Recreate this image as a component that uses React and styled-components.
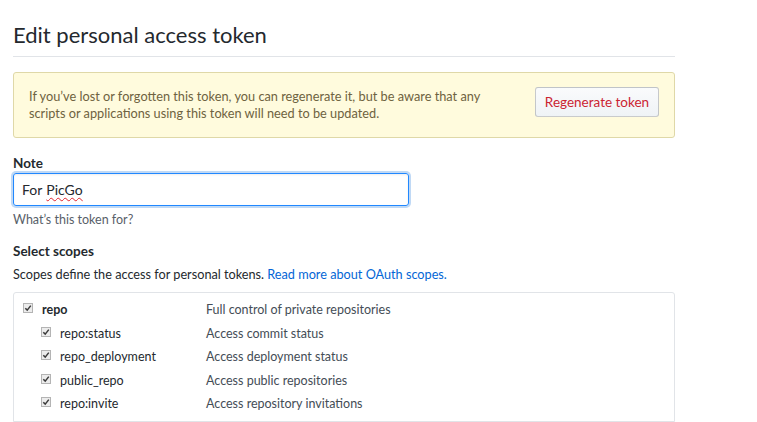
import React from 'react';
import styled, { createGlobalStyle } from 'styled-components';

const GlobalStyle = createGlobalStyle`
  body {
    margin: 0;
    background: #fff;
    font-family: Lato, "Open Sans", Arial, sans-serif;
    color: #24292e;
  }
`;

const Page = styled.div`
  width: 662px;
  padding: 0 13px;
`;

const Heading = styled.h2`
  margin: 20px 0 0;
  padding-bottom: 6px;
  border-bottom: 1px solid #e1e4e8;
  font-size: 22px;
  font-weight: 400;
  line-height: 30px;
  color: #24292e;
`;

const Flash = styled.div`
  margin-top: 15px;
  display: flex;
  align-items: flex-start;
  justify-content: space-between;
  padding: 15px 15px 15px;
  background: #fffbdd;
  border: 1px solid #dfd8a8;
  border-radius: 3px;
`;

const FlashText = styled.p`
  margin: 0;
  width: 470px;
  font-size: 12.75px;
  line-height: 17px;
  color: #6e6240;
`;

const Button = styled.button`
  margin-top: -1px;
  width: 124px;
  height: 30px;
  padding: 0;
  font-family: inherit;
  font-size: 13.5px;
  color: #cb2431;
  background: linear-gradient(#fafbfc, #eff3f6);
  border: 1px solid rgba(27, 31, 35, 0.22);
  border-radius: 3px;
`;

const FormGroup = styled.div`
  margin-top: ${(p) => p.$top}px;
`;

const Label = styled.div`
  font-size: 13.5px;
  font-weight: 700;
  line-height: 20px;
`;

const Field = styled.div`
  box-sizing: border-box;
  width: 396px;
  height: 33px;
  padding: 0 8px;
  display: flex;
  align-items: center;
  font-size: 14px;
  color: #24292e;
  border: 1px solid #2188ff;
  border-radius: 3px;
  box-shadow: inset 0 1px 2px rgba(27, 31, 35, 0.075), 0 0 0 2px rgba(3, 102, 214, 0.25);
`;

const Misspelled = styled.span`
  margin-left: 4px;
  text-decoration: underline wavy #e0242e;
  text-decoration-thickness: 1px;
  text-underline-offset: 2px;
`;

const Hint = styled.p`
  margin: 5px 0 0;
  font-size: 12.5px;
  line-height: 18px;
  color: #586069;
`;

const Description = styled.p`
  margin: 4px 0 0;
  font-size: 12.7px;
  line-height: 18px;
  color: #24292e;
`;

const Link = styled.a`
  color: #0366d6;
  text-decoration: none;
`;

const ScopeBox = styled.div`
  margin-top: 9px;
  padding: 5px 0 5px 9px;
  border: 1px solid #e1e4e8;
  border-radius: 3px 3px 0 0;
`;

const ScopeRow = styled.div`
  display: grid;
  grid-template-columns: 183px 1fr;
  height: 23.5px;
  align-items: center;
  font-size: 12.5px;
`;

const ScopeName = styled.label`
  display: flex;
  align-items: center;
  gap: 9px;
  padding-left: ${(p) => (p.$child ? 18 : 0)}px;
  font-weight: ${(p) => (p.$child ? 400 : 700)};
  color: #24292e;
`;

const ScopeNote = styled.span`
  color: #444d56;
`;

const Box = styled.svg`
  flex: none;
  width: 10px;
  height: 10px;
  margin-top: -3px;
`;

const Check = () => (
  <Box viewBox="0 0 10 10">
    <rect x="0.5" y="0.5" width="9" height="9" fill="#ececec" stroke="#b4b4b4" />
    <path d="M2.3 5.2 L4.2 7.1 L7.8 2.6" fill="none" stroke="#3a3a3a" strokeWidth="1.5" />
  </Box>
);

const scopes = [
  { name: 'repo', note: 'Full control of private repositories' },
  { name: 'repo:status', note: 'Access commit status', child: true },
  { name: 'repo_deployment', note: 'Access deployment status', child: true },
  { name: 'public_repo', note: 'Access public repositories', child: true },
  { name: 'repo:invite', note: 'Access repository invitations', child: true },
];

export default function App() {
  return (
    <Page>
      <GlobalStyle />
      <Heading>Edit personal access token</Heading>
      <Flash>
        <FlashText>
          If you’ve lost or forgotten this token, you can regenerate it, but be aware that any
          scripts or applications using this token will need to be updated.
        </FlashText>
        <Button>Regenerate token</Button>
      </Flash>

      <FormGroup $top={15}>
        <Label>Note</Label>
        <Field>
          For<Misspelled>PicGo</Misspelled>
        </Field>
        <Hint>What’s this token for?</Hint>
      </FormGroup>

      <FormGroup $top={12}>
        <Label>Select scopes</Label>
        <Description>
          Scopes define the access for personal tokens.{' '}
          <Link href="#">Read more about OAuth scopes.</Link>
        </Description>
      </FormGroup>

      <ScopeBox>
        {scopes.map((s) => (
          <ScopeRow key={s.name}>
            <ScopeName $child={s.child}>
              <Check />
              {s.name}
            </ScopeName>
            <ScopeNote>{s.note}</ScopeNote>
          </ScopeRow>
        ))}
      </ScopeBox>
    </Page>
  );
}
